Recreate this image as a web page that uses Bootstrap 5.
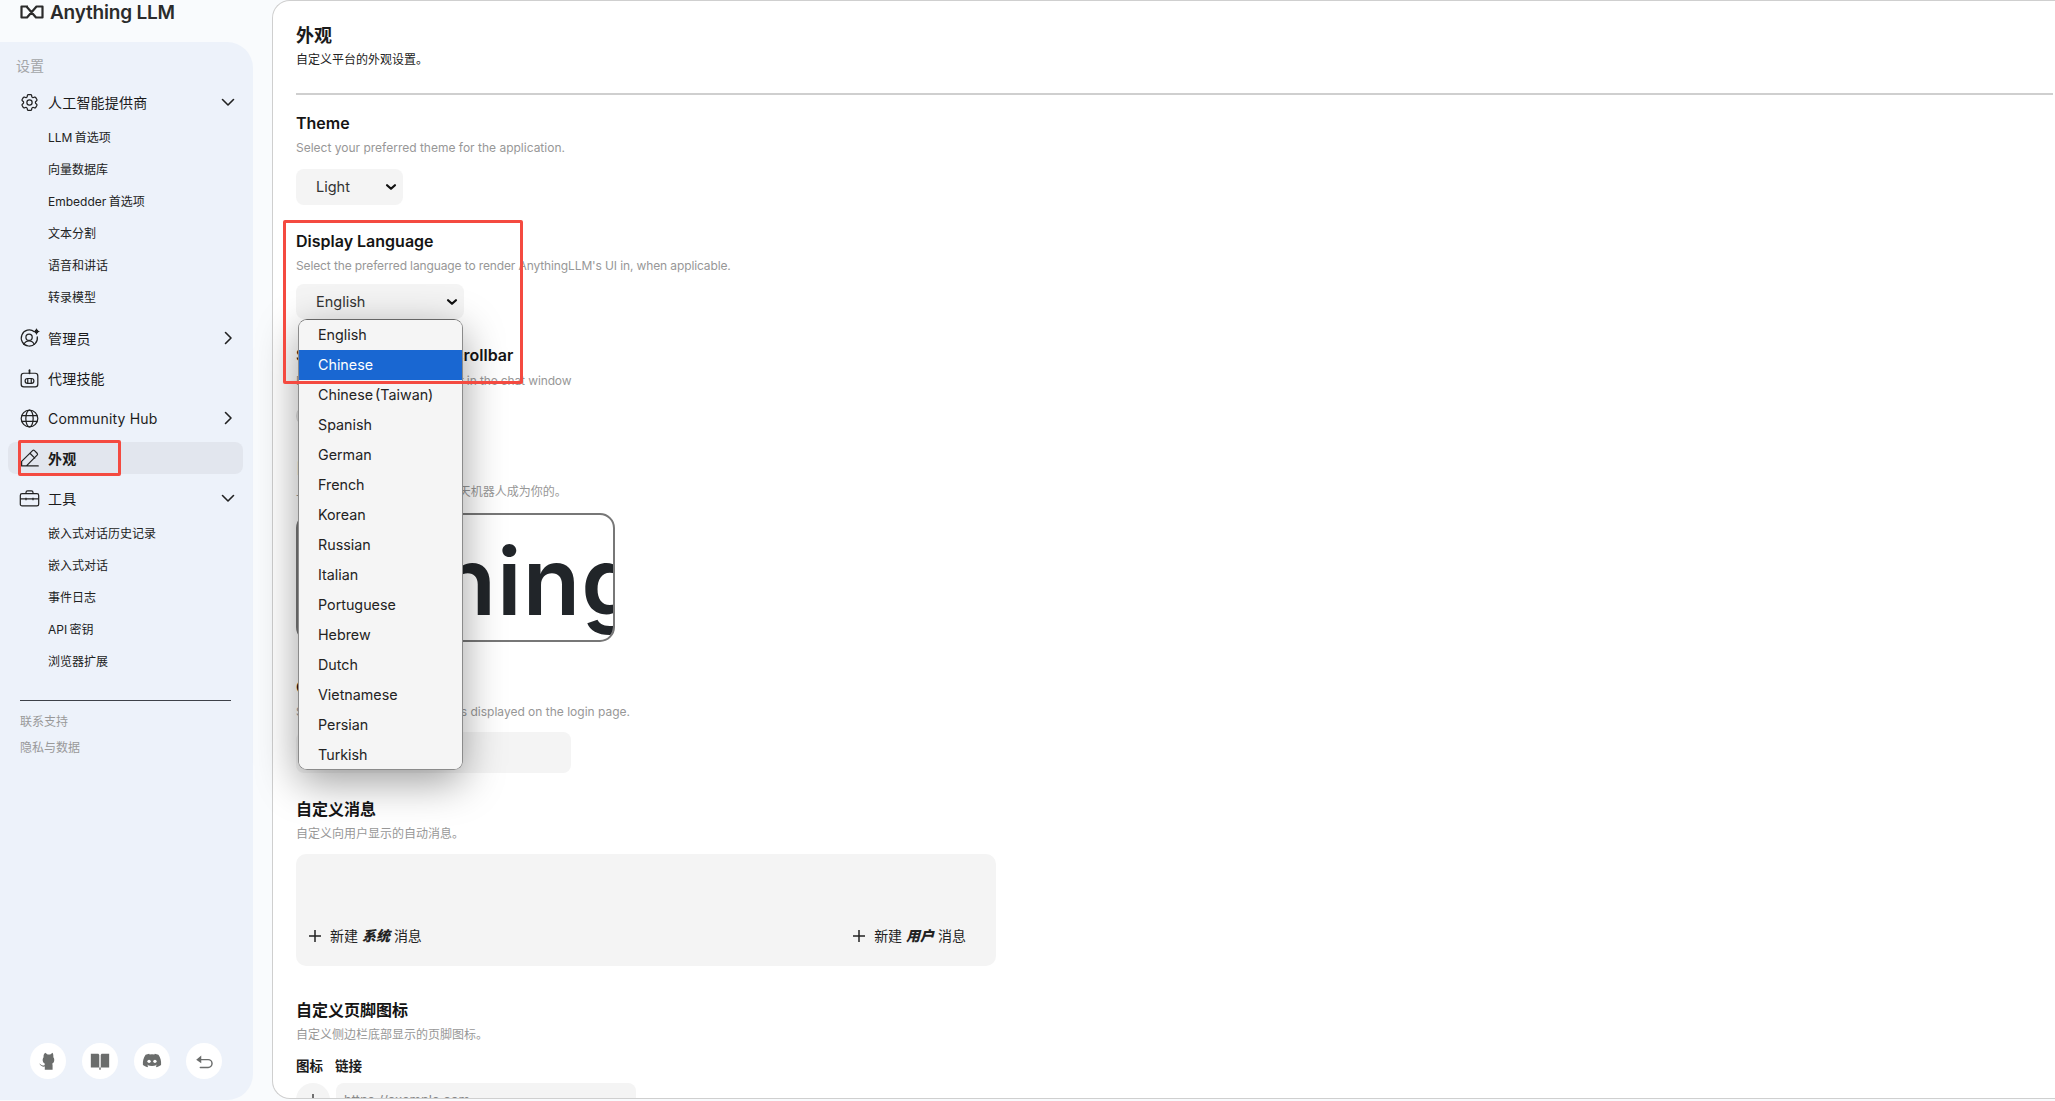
<!DOCTYPE html>
<html lang="zh">
<head>
    <meta charset="UTF-8">
    <meta name="viewport" content="width=device-width, initial-scale=1.0">
    <title>AnythingLLM 外观</title>
    <link href="https://cdn.jsdelivr.net/npm/bootstrap@5.3.0/dist/css/bootstrap.min.css" rel="stylesheet">
    <style>
        html, body { height: 100%; overflow: hidden; }
        body {
            background: #f9fbfd;
            color: #1b1b1b;
            font-family: Inter, "Noto Sans CJK SC", sans-serif;
            font-size: 14px;
        }
        .shell { height: 1101px; }

        /* sidebar */
        .side-col { width: 272px; flex: none; }
        .brand { height: 42px; padding-left: 20px; padding-top: 1px; gap: 6px; }
        .brand-name { font-size: 19px; font-weight: 600; line-height: 24px; color: #2b2b2b; letter-spacing: -.2px; }
        .side-panel {
            width: 253px;
            height: 1058px;
            background: #edf2fa;
            border-radius: 0 26px 26px 0;
            padding: 15px 0 21px 0;
        }
        .side-title { color: #a3a5a8; line-height: 18px; padding-left: 16px; margin-bottom: 11px; }
        .side-row {
            height: 32px;
            margin: 0 10px 8px 8px;
            padding: 0 8px 0 11px;
            border-radius: 8px;
            gap: 8px;
            color: #1b1b1b;
            letter-spacing: .2px;
        }
        .side-row.is-active { background: #e2e6ee; font-weight: 700; }
        .side-row .ico { width: 21px; height: 21px; flex: none; }
        .side-row .chev { width: 16px; height: 16px; flex: none; margin-left: auto; margin-right: -1px; }
        .side-sub { margin: -4px 0 8px 0; }
        .side-sub div { height: 32px; line-height: 32px; padding-left: 48px; font-size: 12px; color: #222; word-spacing: -1px; }
        .side-rule { border-top: 1px solid #3d4148; margin: 14px 22px 0 20px; }
        .side-foot { font-size: 12px; color: #999; padding-left: 20px; line-height: 26px; margin-top: 8px; }
        .foot-icons { gap: 16px; padding-left: 30px; }
        .foot-btn { width: 36px; height: 36px; border-radius: 50%; background: #fff; }
        .foot-btn svg { width: 22px; height: 22px; }

        /* main panel */
        .main-panel {
            height: 1099px;
            background: #fff;
            border: 1px solid #cfcfcf;
            border-right: 0;
            border-radius: 18px 0 0 18px;
            padding: 25px 2px 0 23px;
            overflow: hidden;
        }
        .page-title { font-size: 18px; font-weight: 700; line-height: 20px; }
        .page-sub { font-size: 12px; line-height: 18px; margin-top: 5px; color: #222; }
        .page-rule { height: 2px; background: #cfcfcf; margin-top: 24px; }
        .sect-head { font-size: 16px; font-weight: 600; line-height: 24px; color: #141414; }
        .sect-desc { font-size: 12px; line-height: 18px; color: #979797; margin-top: 4px; }
        #sTheme { margin-top: 16px; }
        #sLang { margin-top: 24px; }
        #sLang .sect-desc { letter-spacing: -.12px; }
        #sScroll { margin-top: 24px; }
        #sScroll .sect-desc { margin-top: 5px; letter-spacing: -.12px; }
        #sLogo { margin-top: 30px; }
        #sName { margin-top: 33px; }
        #sMsg { margin-top: 24px; }
        #sFoot { margin-top: 32px; }

        .pick {
            display: block;
            background-color: #f4f4f4;
            border: 0;
            border-radius: 8px;
            font-size: 14.5px;
            color: #333;
            padding: 0 0 0 20px;
            background-position: right 5px center;
            background-size: 14px 14px;
            background-image: url("data:image/svg+xml,%3csvg xmlns='http://www.w3.org/2000/svg' viewBox='0 0 16 16'%3e%3cpath fill='none' stroke='%23111' stroke-linecap='round' stroke-linejoin='round' stroke-width='2.6' d='M3.5 6l4.500 4 4.500-4'/%3e%3c/svg%3e");
        }
        .pick-theme { width: 107px; height: 36px; margin-top: 12px; }
        .pick-lang { width: 168px; height: 35px; margin-top: 9px; }
        .toggle-slot { margin-top: 11px; height: 24px; }
        .toggle-slot .form-check-input { width: 44px; height: 22px; background-color: #e8e8e8; border-color: #ddd; }
        .logo-frame {
            width: 319px;
            height: 129px;
            margin-top: 12px;
            border: 2px solid #777;
            border-radius: 15px;
            overflow: hidden;
            justify-content: flex-end;
        }
        .logo-word {
            font-size: 94px;
            font-weight: 600;
            line-height: 133px;
            color: #212529;
            white-space: nowrap;
            margin-right: -28px;
            letter-spacing: 1px;
        }
        .name-input { width: 275px; height: 41px; margin-top: 11px; background: #f4f4f4; border: 0; border-radius: 8px; }
        .msg-box {
            width: 700px;
            height: 112px;
            margin-top: 11px;
            background: #f4f4f4;
            border-radius: 10px;
            padding: 0 30px 20px 12px;
        }
        .msg-add { font-size: 14px; gap: 8px; line-height: 20px; color: #222; }
        .msg-add svg { width: 14px; height: 14px; }
        .msg-add b { font-style: italic; font-weight: 800; }
        .foot-labels { font-size: 13.5px; font-weight: 700; gap: 12px; margin-top: 12px; line-height: 20px; }
        .foot-row { gap: 6px; margin-top: 7px; }
        .round-add { width: 34px; height: 34px; border-radius: 50%; background: #f4f4f4; flex: none; }
        .round-add svg { width: 14px; height: 14px; }
        .foot-url {
            width: 300px; height: 34px; background: #f4f4f4; border: 0; border-radius: 8px;
            font-size: 13px; padding: 0 8px;
        }
        .foot-url::placeholder { color: #888; }

        /* open language list */
        .lang-menu {
            position: absolute;
            left: 298px;
            top: 319px;
            width: 165px;
            height: 451px;
            background: #f5f5f5;
            border: 1px solid #8b8b8b;
            border-top-color: #666;
            border-radius: 9px;
            overflow: hidden;
        }
        .menu-shadow {
            position: absolute;
            left: 298px;
            top: 319px;
            width: 165px;
            height: 451px;
            border-radius: 9px;
            box-shadow: 0 12px 42px rgba(0, 0, 0, .38);
        }
        .lang-menu .list-group-item {
            flex: none;
            height: 30px;
            line-height: 30px;
            margin: 0;
            padding: 0 0 0 19px;
            border: 0;
            border-radius: 0;
            font-size: 14.3px;
            word-spacing: -2px;
            color: #232323;
            background: #f5f5f5;
        }
        .lang-menu .list-group-item.active { margin-top: 0; border-top-width: 0; background: #1967d2; color: #fff; }

        /* red annotations */
        .mark-box {
            position: absolute;
            border: 3px solid #f44a40;
            border-radius: 2px;
            pointer-events: none;
        }
        .mark-nav { left: 18px; top: 440px; width: 103px; height: 36px; }
        .mark-lang { left: 283px; top: 220px; width: 240px; height: 164px; }
    </style>
</head>
<body>
    <div class="shell d-flex">
        <div class="side-col">
            <div class="brand d-flex align-items-start">
                <svg width="24" height="14" viewBox="0 0 24 14" class="mt-1" fill="none" stroke="#2b2b2b" stroke-width="2.200" stroke-linejoin="round"><path d="M8 1.500H1.500v11H7L16.500 1.500h6v11H16L6.500 1.500"/></svg>
                <span class="brand-name">Anything LLM</span>
            </div>
            <div class="side-panel d-flex flex-column">
                <div class="side-title">设置</div>

                <div class="side-row d-flex align-items-center">
                    <svg class="ico" viewBox="0 0 24 24" fill="none" stroke="#222" stroke-width="1.400" stroke-linejoin="round"><path d="M9.594 3.94c.09-.542.56-.94 1.11-.94h2.593c.55 0 1.02.398 1.11.94l.213 1.281c.063.374.313.686.645.87.074.04.147.083.22.127.325.196.72.257 1.075.124l1.217-.456a1.125 1.125 0 0 1 1.37.49l1.296 2.247a1.125 1.125 0 0 1-.26 1.431l-1.003.827c-.293.241-.438.613-.43.992a7.723 7.723 0 0 1 0 .255c-.008.378.137.75.43.991l1.004.827c.424.35.534.955.26 1.43l-1.298 2.247a1.125 1.125 0 0 1-1.369.491l-1.217-.456c-.355-.133-.75-.072-1.076.124a6.47 6.47 0 0 1-.22.128c-.331.183-.581.495-.644.869l-.213 1.281c-.09.543-.56.94-1.11.94h-2.594c-.55 0-1.019-.398-1.11-.94l-.213-1.281c-.062-.374-.312-.686-.644-.87a6.52 6.52 0 0 1-.22-.127c-.325-.196-.72-.257-1.076-.124l-1.217.456a1.125 1.125 0 0 1-1.369-.49l-1.297-2.247a1.125 1.125 0 0 1 .26-1.431l1.004-.827c.292-.24.437-.613.43-.991a6.932 6.932 0 0 1 0-.255c.007-.38-.138-.751-.43-.992l-1.004-.827a1.125 1.125 0 0 1-.26-1.43l1.297-2.247a1.125 1.125 0 0 1 1.37-.491l1.216.456c.356.133.751.072 1.076-.124.072-.044.146-.086.22-.128.332-.183.582-.495.644-.869l.214-1.28Z"/><circle cx="12" cy="12" r="3"/></svg>
                    <span>人工智能提供商</span>
                    <svg class="chev" viewBox="0 0 16 16" fill="none" stroke="#222" stroke-width="1.600" stroke-linecap="round" stroke-linejoin="round"><path d="M2.500 5.500 8 11l5.500-5.500"/></svg>
                </div>
                <div class="side-sub">
                    <div>LLM 首选项</div>
                    <div>向量数据库</div>
                    <div>Embedder 首选项</div>
                    <div>文本分割</div>
                    <div>语音和讲话</div>
                    <div>转录模型</div>
                </div>

                <div class="side-row d-flex align-items-center">
                    <svg class="ico" viewBox="0 0 24 24" fill="none" stroke="#222" stroke-width="1.400" stroke-linecap="round"><path d="M17.500 4.200A9.200 9.200 0 1 0 20.900 10"/><circle cx="11.500" cy="10.500" r="3.600"/><path d="M5.500 18.800c1.200-2.500 3.400-4 6-4s4.800 1.500 6 4"/><circle cx="20" cy="4" r="1.600" fill="#222"/><path d="M20 1.200v1M20 5.800v1M17.200 4h1M21.800 4h1"/></svg>
                    <span>管理员</span>
                    <svg class="chev" viewBox="0 0 16 16" fill="none" stroke="#222" stroke-width="1.600" stroke-linecap="round" stroke-linejoin="round"><path d="M5.500 2.500 11 8l-5.500 5.500"/></svg>
                </div>
                <div class="side-row d-flex align-items-center">
                    <svg class="ico" viewBox="0 0 24 24" fill="none" stroke="#222" stroke-width="1.400" stroke-linecap="round"><rect x="2.500" y="6" width="19" height="15.500" rx="3"/><path d="M12 6V2.500" stroke-width="2"/><rect x="7" y="12" width="10" height="5.500" rx="2.700"/><path d="M10 12v5.500M14 12v5.500"/></svg>
                    <span>代理技能</span>
                </div>
                <div class="side-row d-flex align-items-center">
                    <svg class="ico" viewBox="0 0 24 24" fill="none" stroke="#222" stroke-width="1.400"><circle cx="12" cy="12" r="9.500"/><ellipse cx="12" cy="12" rx="4.200" ry="9.500"/><path d="M3 8.800h18M3 15.200h18"/></svg>
                    <span>Community Hub</span>
                    <svg class="chev" viewBox="0 0 16 16" fill="none" stroke="#222" stroke-width="1.600" stroke-linecap="round" stroke-linejoin="round"><path d="M5.500 2.500 11 8l-5.500 5.500"/></svg>
                </div>
                <div class="side-row is-active d-flex align-items-center">
                    <svg class="ico" viewBox="0 0 24 24" fill="none" stroke="#222" stroke-width="1.400" stroke-linejoin="round" stroke-linecap="round"><path d="M8.500 20.500H3v-5.200L15.500 3a1.600 1.600 0 0 1 2.200 0l3 3a1.600 1.600 0 0 1 0 2.200L8.500 20.500ZM12.500 6l5.500 5.500M8.500 20.500H22"/></svg>
                    <span>外观</span>
                </div>
                <div class="side-row d-flex align-items-center">
                    <svg class="ico" viewBox="0 0 24 24" fill="none" stroke="#222" stroke-width="1.400" stroke-linejoin="round"><rect x="1.500" y="6.500" width="21" height="14" rx="2"/><path d="M8 6.500V5a1.800 1.800 0 0 1 1.800-1.800h4.400A1.800 1.800 0 0 1 16 5v1.500M1.500 12.500h21M8 11v3M16 11v3"/></svg>
                    <span>工具</span>
                    <svg class="chev" viewBox="0 0 16 16" fill="none" stroke="#222" stroke-width="1.600" stroke-linecap="round" stroke-linejoin="round"><path d="M2.500 5.500 8 11l5.500-5.500"/></svg>
                </div>
                <div class="side-sub">
                    <div>嵌入式对话历史记录</div>
                    <div>嵌入式对话</div>
                    <div>事件日志</div>
                    <div>API 密钥</div>
                    <div>浏览器扩展</div>
                </div>

                <div class="side-rule"></div>
                <div class="side-foot">
                    <div>联系支持</div>
                    <div>隐私与数据</div>
                </div>

                <div class="foot-icons d-flex mt-auto">
                    <div class="foot-btn d-flex align-items-center justify-content-center">
                        <svg viewBox="0 0 24 24" fill="#6b6d6c"><path d="M9 3l2.600 2h2.800L17 3c.7 1.500 1 3 .8 5 1 1.200 1.200 2.600.9 4-.3 1.500-1.200 2.500-2.200 3l.5 1v5.500H8.500V18c-2 .5-4-.3-5-1.800-.4-.6-.9-1-1.500-1.100.9-.3 1.700.2 2.400 1 .8.900 2 1.200 3.800.6l.4-1.700c-1-.5-1.900-1.500-2.300-3-.3-1.400 0-2.800.9-4C7 6 7.300 4.500 9 3Z"/></svg>
                    </div>
                    <div class="foot-btn d-flex align-items-center justify-content-center">
                        <svg viewBox="0 0 24 24" fill="#6b6d6c"><path d="M2 4h7.500c1 0 1.700.7 1.700 1.700V19H2ZM22 4h-7.500c-1 0-1.700.7-1.700 1.700V19H22ZM11.200 19h1.600v2.500h-1.600Z"/></svg>
                    </div>
                    <div class="foot-btn d-flex align-items-center justify-content-center">
                        <svg viewBox="0 0 24 24"><path fill="#6b6d6c" d="M19 5.300A16 16 0 0 0 15.100 4l-.5 1a15 15 0 0 0-5.200 0l-.5-1A16 16 0 0 0 5 5.300C2.500 9 1.800 12.700 2.100 16.300A16 16 0 0 0 7 18.800l1-1.700-1.600-.8.400-.3a11 11 0 0 0 10.400 0l.4.300-1.600.8 1 1.700a16 16 0 0 0 4.900-2.500c.4-4.200-.6-7.900-2.900-11Z"/><circle cx="8.800" cy="12.300" r="1.800" fill="#fff"/><circle cx="15.200" cy="12.300" r="1.800" fill="#fff"/></svg>
                    </div>
                    <div class="foot-btn d-flex align-items-center justify-content-center">
                        <svg viewBox="0 0 24 24" fill="none" stroke="#6b6d6c" stroke-width="1.600" stroke-linecap="round"><path d="M7 10.500h9.500a4 4 0 0 1 0 8.500H8"/><path d="M9 6 3.500 10.500 9 14.500Z" fill="#6b6d6c" stroke="none"/></svg>
                    </div>
                </div>
            </div>
        </div>

        <div class="main-panel flex-grow-1">
            <div class="page-title">外观</div>
            <div class="page-sub">自定义平台的外观设置。</div>
            <div class="page-rule"></div>

            <div id="sTheme">
                <div class="sect-head">Theme</div>
                <div class="sect-desc">Select your preferred theme for the application.</div>
                <select class="form-select pick pick-theme"><option>Light</option></select>
            </div>

            <div id="sLang">
                <div class="sect-head">Display Language</div>
                <div class="sect-desc">Select the preferred language to render AnythingLLM's UI in, when applicable.</div>
                <select class="form-select pick pick-lang"><option>English</option></select>
            </div>

            <div id="sScroll">
                <div class="sect-head">Show chat window scrollbar</div>
                <div class="sect-desc">Enable or disable the scrollbar in the chat window</div>
                <div class="toggle-slot form-check form-switch"><input class="form-check-input" type="checkbox"></div>
            </div>

            <div id="sLogo">
                <div class="sect-head">自定义徽标</div>
                <div class="sect-desc">上传你的自定义徽标, 让你的聊天机器人成为你的。</div>
                <div class="logo-frame d-flex"><span class="logo-word">Anything</span></div>
            </div>

            <div id="sName">
                <div class="sect-head">Custom App Name</div>
                <div class="sect-desc">Set a custom app name that is displayed on the login page.</div>
                <div class="name-input"></div>
            </div>

            <div id="sMsg">
                <div class="sect-head">自定义消息</div>
                <div class="sect-desc">自定义向用户显示的自动消息。</div>
                <div class="msg-box d-flex align-items-end justify-content-between">
                    <div class="msg-add d-flex align-items-center">
                        <svg viewBox="0 0 14 14" stroke="#222" stroke-width="1.500"><path d="M7 1v12M1 7h12"/></svg>
                        <span>新建 <b>系统</b> 消息</span>
                    </div>
                    <div class="msg-add d-flex align-items-center">
                        <svg viewBox="0 0 14 14" stroke="#222" stroke-width="1.500"><path d="M7 1v12M1 7h12"/></svg>
                        <span>新建 <b>用户</b> 消息</span>
                    </div>
                </div>
            </div>

            <div id="sFoot">
                <div class="sect-head">自定义页脚图标</div>
                <div class="sect-desc">自定义侧边栏底部显示的页脚图标。</div>
                <div class="foot-labels d-flex"><span>图标</span><span>链接</span></div>
                <div class="foot-row d-flex align-items-start">
                    <div class="round-add d-flex align-items-center justify-content-center">
                        <svg viewBox="0 0 14 14" stroke="#444" stroke-width="1.500"><path d="M7 1v12M1 7h12"/></svg>
                    </div>
                    <input class="foot-url" type="text" placeholder="https://example.com">
                </div>
            </div>
        </div>
    </div>

    <div class="menu-shadow"></div>
    <div class="lang-menu list-group">
        <div class="list-group-item">English</div>
        <div class="list-group-item active">Chinese</div>
        <div class="list-group-item">Chinese (Taiwan)</div>
        <div class="list-group-item">Spanish</div>
        <div class="list-group-item">German</div>
        <div class="list-group-item">French</div>
        <div class="list-group-item">Korean</div>
        <div class="list-group-item">Russian</div>
        <div class="list-group-item">Italian</div>
        <div class="list-group-item">Portuguese</div>
        <div class="list-group-item">Hebrew</div>
        <div class="list-group-item">Dutch</div>
        <div class="list-group-item">Vietnamese</div>
        <div class="list-group-item">Persian</div>
        <div class="list-group-item">Turkish</div>
    </div>

    <div class="mark-box mark-nav"></div>
    <div class="mark-box mark-lang"></div>

    <script src="https://cdn.jsdelivr.net/npm/bootstrap@5.3.0/dist/js/bootstrap.bundle.min.js"></script>
</body>
</html>
